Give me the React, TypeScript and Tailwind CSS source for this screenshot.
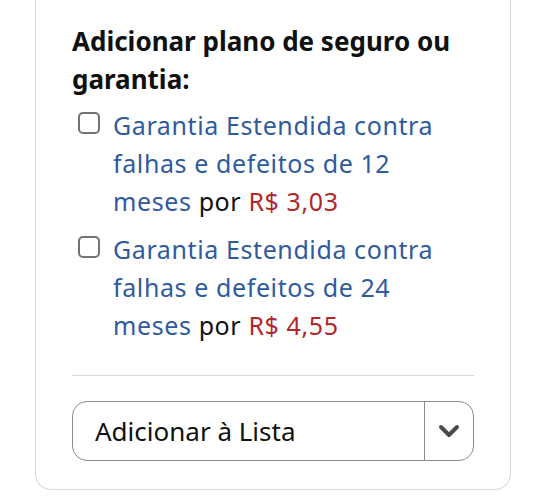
const options = [
  { months: '12', price: 'R$ 3,03' },
  { months: '24', price: 'R$ 4,55' },
];

export default function App() {
  return (
    <div className="min-h-[500px] bg-white pl-[35px]" style={{ fontFamily: '"Noto Sans", "Open Sans", sans-serif' }}>
      <div className="w-[476px] rounded-b-[16px] border border-t-0 border-[#d5d9d9] px-[36px] pt-[22px] pb-[28px]">
        <h2 className="text-[26px] font-bold leading-[38px] text-[#0f1111]">
          Adicionar plano de seguro ou garantia:
        </h2>
        <div className="mt-[8px] flex flex-col gap-[10px]">
          {options.map((o) => (
            <label key={o.months} className="flex items-start">
              <span className="ml-[6px] mt-[6px] h-[22px] w-[22px] shrink-0 rounded-[5px] border-2 border-[#737373] bg-white" />
              <span className="ml-[13px] text-[25px] leading-[38px] tracking-[0.6px]">
                <span className="text-[#2f5a9e]">
                  Garantia Estendida contra falhas e defeitos de {o.months} meses
                </span>{' '}
                <span className="text-[#0f1111]">por</span>{' '}
                <span className="text-[#b1272a]">{o.price}</span>
              </span>
            </label>
          ))}
        </div>
        <hr className="mt-[31px] border-0 border-t border-[#d5d9d9]" />
        <div className="mt-[25px] flex h-[60px] overflow-hidden rounded-[15px] border border-[#888c8c]">
          <div className="flex flex-1 items-center pl-[22px] text-[26px] text-[#0f1111]">Adicionar à Lista</div>
          <div className="flex w-[49px] items-center justify-center border-l border-[#888c8c]">
            <svg width="22" height="14" viewBox="0 0 22 14" fill="none">
              <path d="M3 3l8 8 8-8" stroke="#4a4a4a" strokeWidth="4" strokeLinecap="round" strokeLinejoin="round" />
            </svg>
          </div>
        </div>
      </div>
    </div>
  );
}
